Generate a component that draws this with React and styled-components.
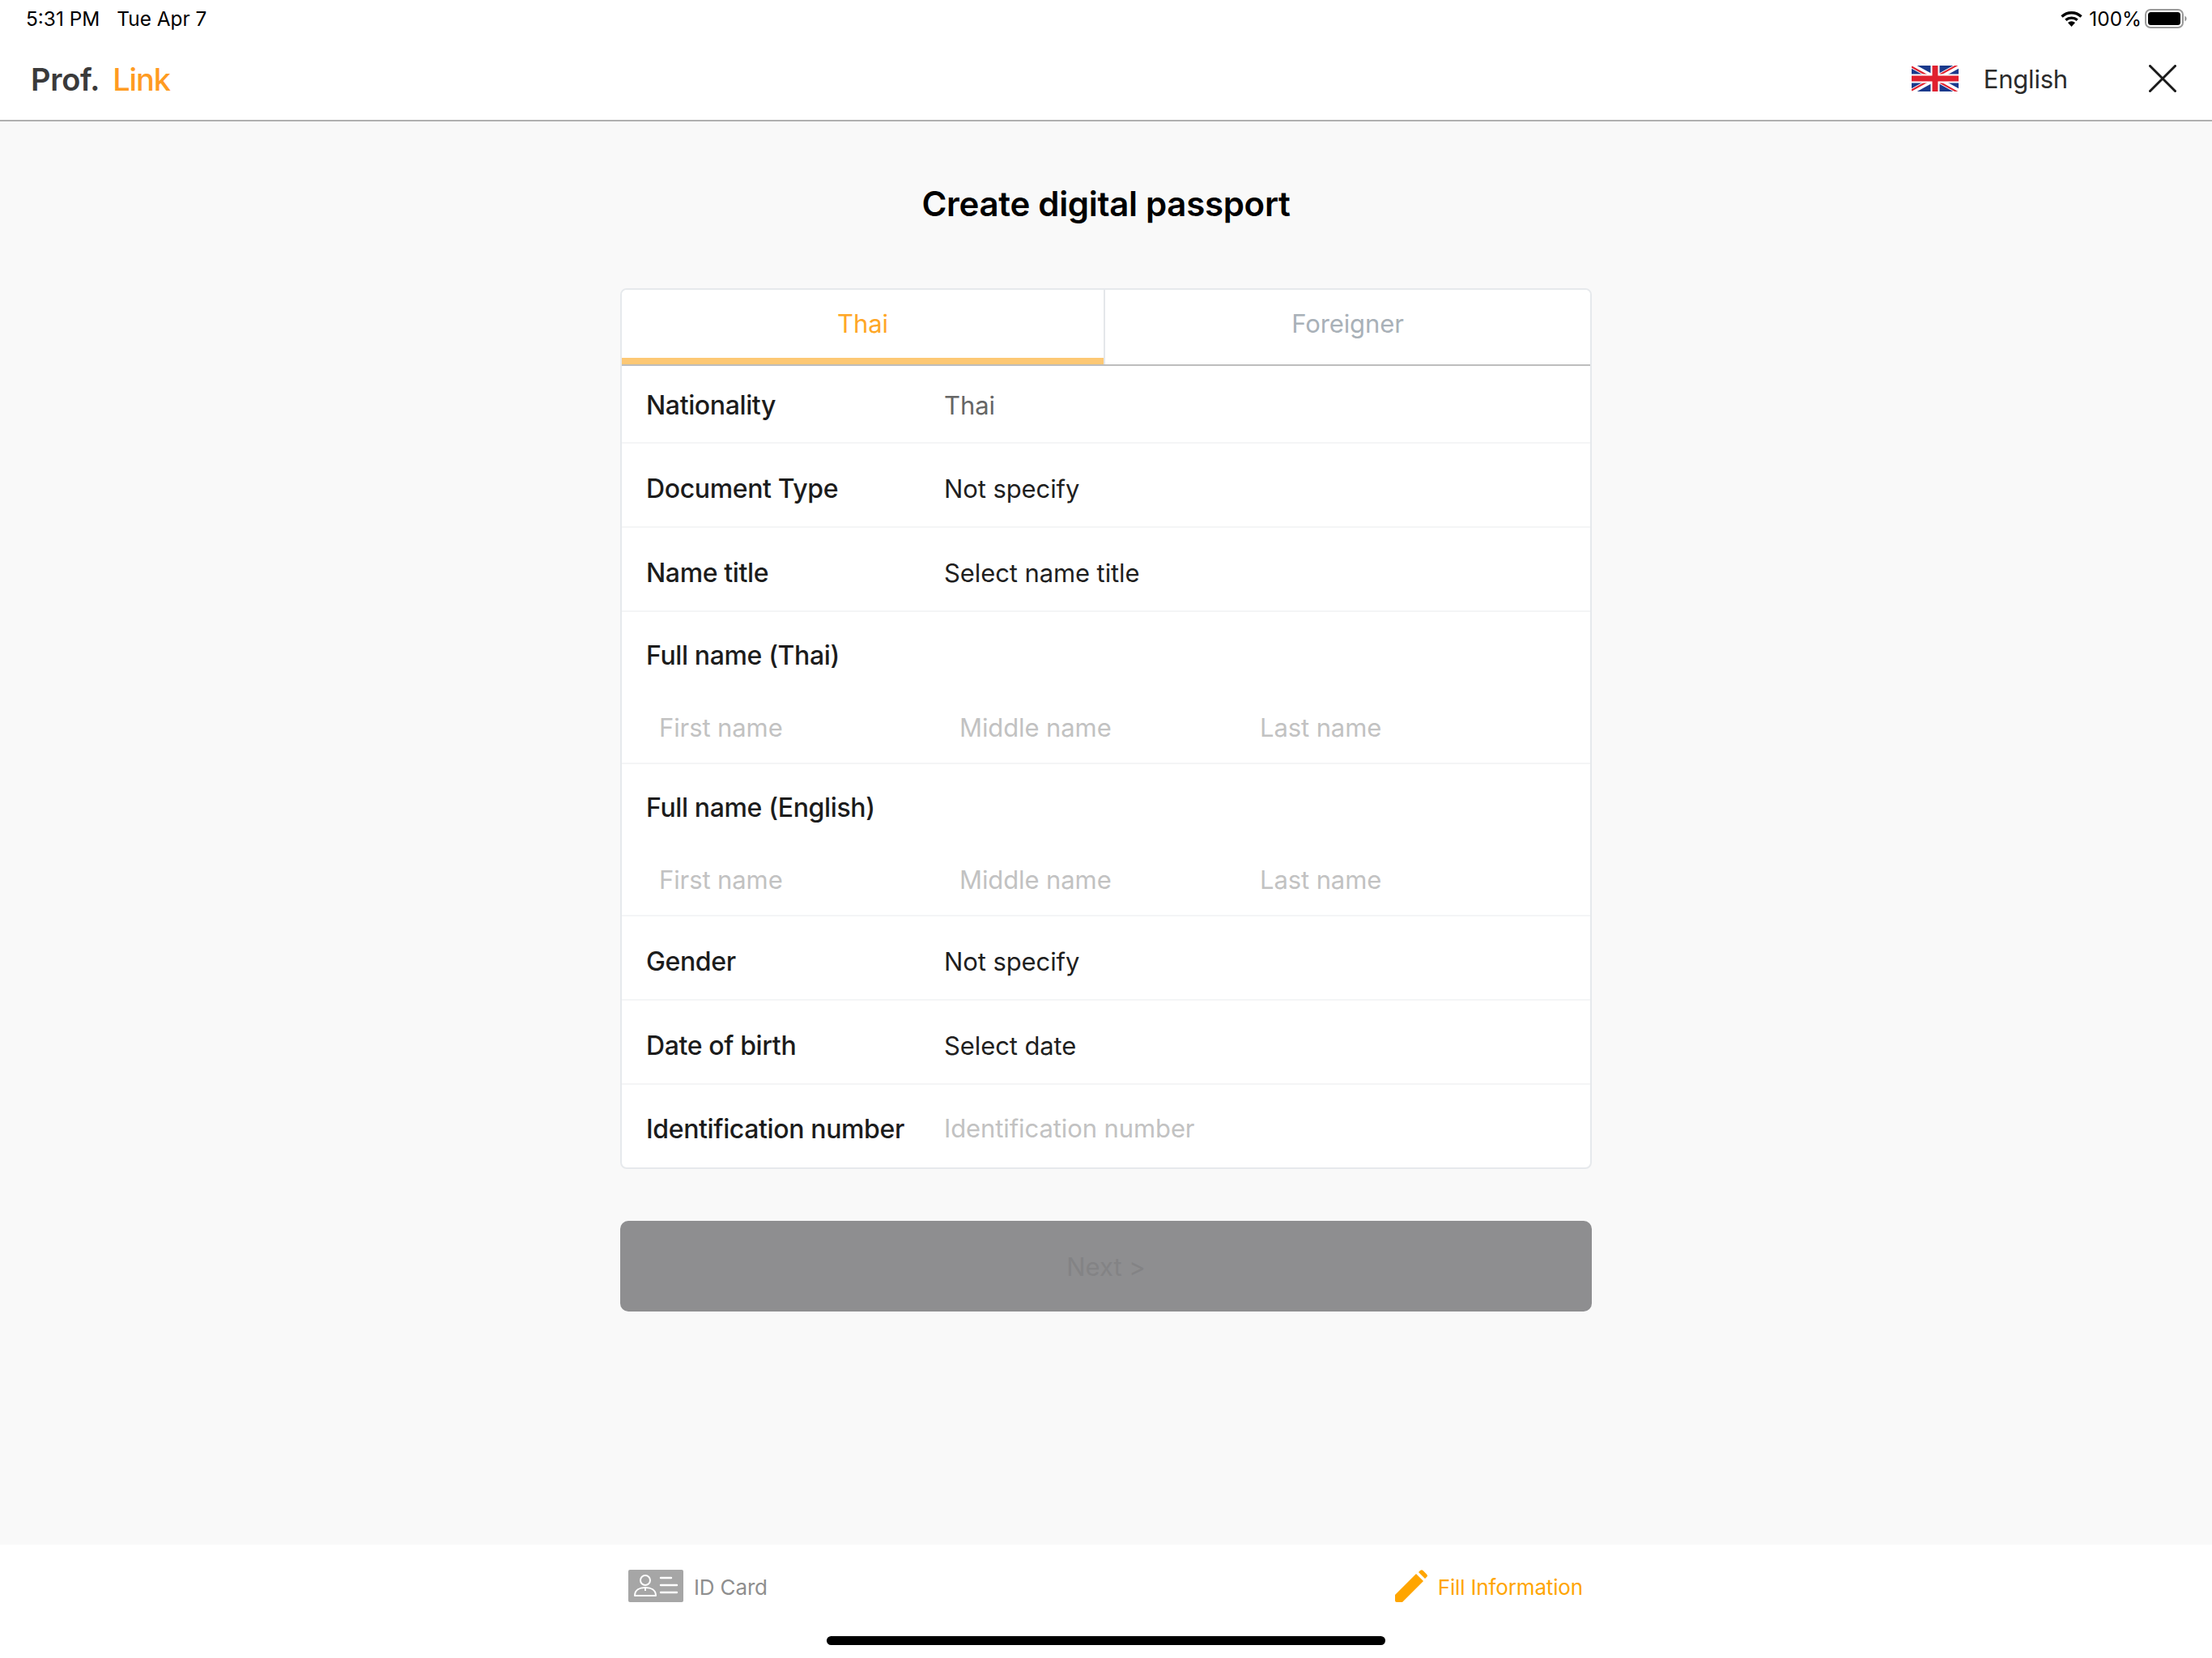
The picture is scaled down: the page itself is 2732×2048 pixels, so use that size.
import React, { useState } from "react";
import styled, { createGlobalStyle } from "styled-components";

const GlobalStyle = createGlobalStyle`
    html, body { margin: 0; padding: 0; background: #f9f9f9; }
    * { box-sizing: border-box; }
    body { font-family: Inter, "Liberation Sans", sans-serif; }
`;

const Page = styled.div`
    position: relative;
    width: 2732px;
    height: 2048px;
    display: flex;
    flex-direction: column;
    overflow: hidden;
`;

const TopArea = styled.header`
    height: 150px;
    background: #fff;
    border-bottom: 2px solid #b0b0b0;
    display: flex;
    flex-direction: column;
`;

const StatusBar = styled.div`
    height: 46px;
    padding: 0 31px 0 32px;
    display: flex;
    align-items: center;
    justify-content: space-between;
    font-size: 24.4px;
    color: #000;
`;

const StatusGroup = styled.div`
    display: flex;
    align-items: center;
    gap: ${(p) => p.$gap || 0}px;
`;

const BatteryText = styled.span`
    margin-left: 4px;
`;

const NavBar = styled.div`
    flex: 1;
    padding: 0 44px 0 38px;
    display: flex;
    align-items: center;
    justify-content: space-between;
`;

const Logo = styled.div`
    margin-top: 2px;
    font-size: 38px;
    font-weight: 600;
    color: #3a3a3a;
    display: flex;
    gap: 16px;
    letter-spacing: -0.3px;
    span { color: #ff9b21; font-weight: 500; letter-spacing: -1.1px; }
`;

const NavRight = styled.div`
    display: flex;
    align-items: center;
`;

const Language = styled.span`
    font-size: 31px;
    letter-spacing: -0.2px;
    color: #2b2b2b;
    margin: 0 100px 0 31px;
`;

const Main = styled.main`
    flex: 1;
    background: #f9f9f9;
    display: flex;
    flex-direction: column;
    align-items: center;
`;

const Title = styled.h1`
    margin: 76px 0 0;
    height: 52px;
    line-height: 52px;
    font-size: 42px;
    font-weight: 600;
    color: #000;
    letter-spacing: -0.3px;
`;

const Card = styled.section`
    width: 1200px;
    margin-top: 78px;
    background: #fff;
    border: 2px solid #e6e9ec;
    border-radius: 8px;
    overflow: hidden;
`;

const Tabs = styled.div`
    display: flex;
    height: 94px;
    border-bottom: 2px solid #bdbdbd;
`;

const Tab = styled.button`
    flex: 1;
    background: #fff;
    border: 0;
    padding: 0 0 ${(p) => (p.$active ? 2 : 10)}px;
    font: inherit;
    font-size: 31px;
    letter-spacing: -0.1px;
    color: ${(p) => (p.$active ? "#ffa726" : "#a9b1b8")};
    border-bottom: ${(p) => (p.$active ? "8px solid #fdc874" : "0")};
    &:first-child { flex: 0 0 595px; }
    & + & { border-left: 2px solid #e4e7ea; }
`;

const Row = styled.div`
    height: ${(p) => p.$height || 104}px;
    padding: ${(p) => p.$top ?? 8}px 0 0 30px;
    display: flex;
    align-items: center;
    font-size: 32px;
    border-bottom: 2px solid #f4f5f6;
    &:last-child { border-bottom: 0; }
`;

const Label = styled.div`
    width: 368px;
    font-weight: 500;
    color: #1c1c1c;
    letter-spacing: -0.37px;
`;

const Value = styled.div`
    font-size: 31px;
    letter-spacing: -0.1px;
    color: ${(p) => (p.$muted ? "#666" : "#1f1f1f")};
`;

const NameRow = styled.div`
    height: 188px;
    padding: 34px 0 0 30px;
    font-size: 32px;
    border-bottom: 2px solid #f4f5f6;
`;

const NameInputs = styled.div`
    display: grid;
    grid-template-columns: 371px 371px 1fr;
    margin-top: 50px;
`;

const TextInput = styled.input`
    width: 100%;
    flex: 1;
    border: 0;
    outline: 0;
    padding: 0 0 0 ${(p) => (p.$flush ? 0 : 16)}px;
    background: transparent;
    font: inherit;
    font-size: 31px;
    letter-spacing: -0.1px;
    line-height: 40px;
    color: #1f1f1f;
    &::placeholder { color: #c2c2c2; opacity: 1; }
`;

const NextButton = styled.button`
    width: 1200px;
    height: 112px;
    margin-top: 64px;
    border: 0;
    border-radius: 10px;
    background: #8e8e90;
    color: #838385;
    font: inherit;
    font-size: 31px;
`;

const BottomBar = styled.footer`
    height: 140px;
    background: #fff;
    padding: 31px 777px 0 776px;
    display: flex;
    justify-content: space-between;
    align-items: flex-start;
`;

const BottomTab = styled.div`
    display: flex;
    align-items: center;
    height: 40px;
    gap: 13px;
    font-size: 26px;
    letter-spacing: -0.15px;
    color: ${(p) => (p.$active ? "#ffa500" : "#8e8e8e")};
`;

const BottomLabel = styled.span`
    padding-top: 3px;
`;

const HomeBar = styled.div`
    position: absolute;
    left: 1021px;
    top: 2021px;
    width: 690px;
    height: 11px;
    border-radius: 6px;
    background: #000;
`;

const WifiIcon = () => (
    <svg width="27" height="20" viewBox="0 0 27 20">
        <path d="M13.5 20 L9 15 A7 7 0 0 1 18 15 Z" fill="#000" />
        <path d="M1.5 7.5 A17.5 17.5 0 0 1 25.5 7.5" stroke="#000" strokeWidth="3.4" fill="none" />
        <path d="M6.3 11.8 A11 11 0 0 1 20.7 11.8" stroke="#000" strokeWidth="3.4" fill="none" />
    </svg>
);

const BatteryIcon = () => (
    <svg width="52" height="24" viewBox="0 0 52 24">
        <rect x="1" y="1" width="46" height="22" rx="6" fill="none" stroke="#9a9a9a" strokeWidth="2" />
        <rect x="4" y="4" width="40" height="16" rx="3.5" fill="#000" />
        <path d="M49.5 8.5 A4 4 0 0 1 49.5 15.5 Z" fill="#8a8a8a" />
    </svg>
);

const UkFlag = () => (
    <svg width="58" height="32" viewBox="0 0 58 32">
        <rect width="58" height="32" fill="#1b3a8c" />
        <path d="M0 0 L58 32 M58 0 L0 32" stroke="#fff" strokeWidth="6.5" />
        <path d="M0 0 L29 16 M58 32 L29 16" stroke="#e0202e" strokeWidth="2" transform="translate(0 1.5)" />
        <path d="M58 0 L29 16 M0 32 L29 16" stroke="#e0202e" strokeWidth="2" transform="translate(0 -1.5)" />
        <path d="M29 0 V32 M0 16 H58" stroke="#fff" strokeWidth="11" />
        <path d="M29 0 V32 M0 16 H58" stroke="#e0202e" strokeWidth="7" />
    </svg>
);

const CloseIcon = () => (
    <svg width="34" height="34" viewBox="0 0 34 34">
        <path d="M1.5 1.5 L32.5 32.5 M32.5 1.5 L1.5 32.5" stroke="#1a1a1a" strokeWidth="3" strokeLinecap="round" />
    </svg>
);

const IdCardIcon = () => (
    <svg width="68" height="40" viewBox="0 0 68 40">
        <rect width="68" height="40" rx="2" fill="#a6a6a6" />
        <circle cx="21" cy="13" r="6" fill="none" stroke="#fff" strokeWidth="2" />
        <path d="M8 32 C8 25 14 22 21 22 C28 22 34 25 34 32 Z" fill="none" stroke="#fff" strokeWidth="2" strokeLinejoin="round" />
        <path d="M21 22 V26" stroke="#fff" strokeWidth="2" />
        <path d="M40 10 H53 M40 19 H60 M40 28 H60" stroke="#fff" strokeWidth="2.4" strokeLinecap="round" />
    </svg>
);

const PencilIcon = () => (
    <svg width="40" height="40" viewBox="0 0 40 40">
        <path d="M0 31 L26 5 L35 14 L9 40 H2 A2 2 0 0 1 0 38 Z" fill="#ffa500" />
        <path d="M29 3 L31 1 A2.6 2.6 0 0 1 34.6 1 L39 5.4 A2.6 2.6 0 0 1 39 9 L37 11 Z" fill="#ffa500" />
    </svg>
);

const NameFields = () => (
    <NameInputs>
        <TextInput placeholder="First name" />
        <TextInput placeholder="Middle name" />
        <TextInput placeholder="Last name" />
    </NameInputs>
);

function App() {
    const [tab, setTab] = useState("thai");

    return (
        <Page>
            <GlobalStyle />
            <TopArea>
                <StatusBar>
                    <StatusGroup $gap={21}>
                        <span>5:31 PM</span>
                        <span>Tue Apr 7</span>
                    </StatusGroup>
                    <StatusGroup $gap={4}>
                        <WifiIcon />
                        <BatteryText>100%</BatteryText>
                        <BatteryIcon />
                    </StatusGroup>
                </StatusBar>
                <NavBar>
                    <Logo>
                        Prof. <span>Link</span>
                    </Logo>
                    <NavRight>
                        <UkFlag />
                        <Language>English</Language>
                        <CloseIcon />
                    </NavRight>
                </NavBar>
            </TopArea>
            <Main>
                <Title>Create digital passport</Title>
                <Card>
                    <Tabs>
                        <Tab $active={tab === "thai"} onClick={() => setTab("thai")}>Thai</Tab>
                        <Tab $active={tab === "foreigner"} onClick={() => setTab("foreigner")}>Foreigner</Tab>
                    </Tabs>
                    <Row $height={96} $top={2}>
                        <Label>Nationality</Label>
                        <Value $muted>Thai</Value>
                    </Row>
                    <Row>
                        <Label>Document Type</Label>
                        <Value>Not specify</Value>
                    </Row>
                    <Row>
                        <Label>Name title</Label>
                        <Value>Select name title</Value>
                    </Row>
                    <NameRow>
                        <Label>Full name (Thai)</Label>
                        <NameFields />
                    </NameRow>
                    <NameRow>
                        <Label>Full name (English)</Label>
                        <NameFields />
                    </NameRow>
                    <Row>
                        <Label>Gender</Label>
                        <Value>Not specify</Value>
                    </Row>
                    <Row>
                        <Label>Date of birth</Label>
                        <Value>Select date</Value>
                    </Row>
                    <Row $height={102} $top={6}>
                        <Label>Identification number</Label>
                        <TextInput $flush placeholder="Identification number" />
                    </Row>
                </Card>
                <NextButton disabled>Next &gt;</NextButton>
            </Main>
            <BottomBar>
                <BottomTab>
                    <IdCardIcon />
                    <BottomLabel>ID Card</BottomLabel>
                </BottomTab>
                <BottomTab $active>
                    <PencilIcon />
                    <BottomLabel>Fill Information</BottomLabel>
                </BottomTab>
            </BottomBar>
            <HomeBar />
        </Page>
    );
}

export default App;
